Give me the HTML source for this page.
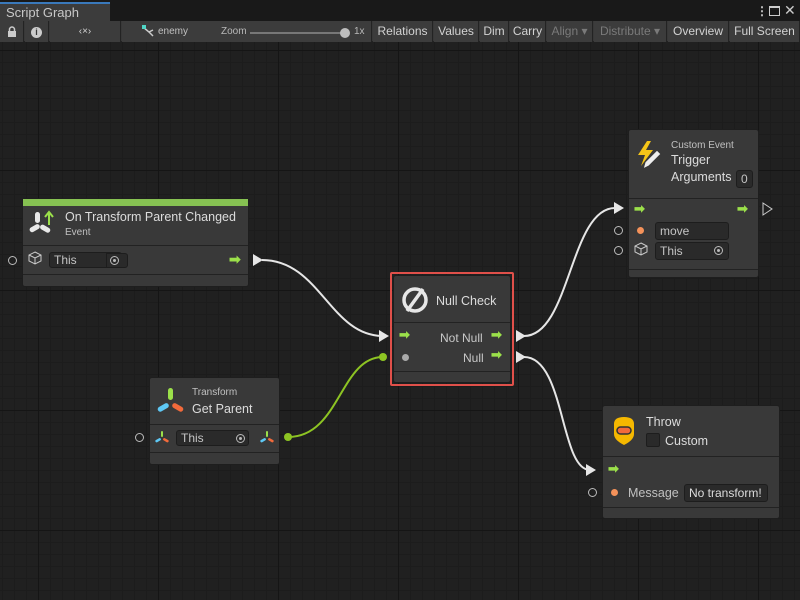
<!DOCTYPE html>
<html><head><meta charset="utf-8"><style>
*{margin:0;padding:0;box-sizing:border-box}
body{width:800px;height:600px;overflow:hidden;background:#202020;font-family:"Liberation Sans",sans-serif;color:#d2d2d2;position:relative}
.grid{position:absolute;left:0;top:42px;width:800px;height:558px;
background-image:
linear-gradient(#151515 1px,transparent 1px),
linear-gradient(90deg,#151515 1px,transparent 1px),
linear-gradient(#1c1c1c 1px,transparent 1px),
linear-gradient(90deg,#1c1c1c 1px,transparent 1px);
background-size:120px 120px,120px 120px,12px 12px,12px 12px;
background-position:0 8px,38px 0,0 8px,38px 0}
.abs{position:absolute}
.top{left:0;top:0;width:800px;height:21px;background:#191919}
.tab{left:0;top:2px;width:110px;height:19px;background:#3c3c3c;border-top:2px solid #3a79bb;font-size:13px;padding:1px 0 0 6px;color:#c8c8c8}
.tb{left:0;top:21px;width:800px;height:21px;background:#383838;border-bottom:1px solid #232323}
.btn{position:absolute;top:21px;height:21px;background:#3c3c3c;border-right:1px solid #232323;font-size:12px;color:#d2d2d2;line-height:21px;text-align:center}
.dis{color:#7a7a7a}
.node{position:absolute;background:#393939;border:1px solid #1e1e1e;border-radius:3px}
.sep{position:absolute;left:0;right:0;height:1px;background:#222}
.t{position:absolute;white-space:nowrap}
.fld{position:absolute;background:#2a2a2a;border:1px solid #1d1d1d;border-radius:3px;font-size:12px;color:#c4c4c4;padding-left:4px;line-height:15px}
.port{position:absolute;width:9px;height:9px;border:1px solid #bbb;border-radius:50%}
.dot{position:absolute;width:7px;height:7px;border-radius:50%;background:#f4925a}
</style></head><body>
<div class="grid"></div>
<div class="abs top"></div>
<div class="abs tab">Script Graph</div>
<div class="abs" style="left:756px;top:4px;color:#ccc;font-size:12px;font-weight:bold">⋮</div>
<div class="abs" style="left:769px;top:6px;width:11px;height:10px;border:1px solid #ccc;border-top-width:2px"></div>
<div class="abs" style="left:784px;top:2px;color:#ccc;font-size:14px">✕</div>
<div class="abs tb"></div>
<div class="btn" style="left:0;width:24px"></div>
<svg class="abs" style="left:7px;top:26px" width="10" height="11"><path d="M2.5 5 V3.5 a2.5 2.5 0 0 1 5 0 V5" stroke="#ccc" stroke-width="1.5" fill="none"/><rect x="1" y="5" width="8" height="6" fill="#ccc"/></svg>
<div class="btn" style="left:25px;width:24px"><span style="display:inline-block;width:11px;height:11px;border-radius:50%;background:#ccc;color:#383838;font-size:9px;line-height:11px;font-weight:bold">i</span></div>
<div class="btn" style="left:50px;width:71px;font-size:10px">‹×›</div>
<div class="btn" style="left:122px;width:250px;text-align:left"></div>
<svg class="abs" style="left:141px;top:24px" width="14" height="14"><path d="M2 3 L8 8 L12 12 M8 8 L12 6" stroke="#ccc" stroke-width="1.5" fill="none"/><rect x="1" y="1" width="4" height="4" fill="#4fd6c6"/></svg>
<div class="t" style="left:158px;top:26px;font-size:10px;color:#c0c0c0">enemy</div>
<div class="t" style="left:221px;top:26px;font-size:10px;color:#b8b8b8">Zoom</div>
<div class="abs" style="left:250px;top:32px;width:95px;height:2px;background:#777"></div>
<div class="abs" style="left:340px;top:28px;width:10px;height:10px;border-radius:50%;background:#bdbdbd"></div>
<div class="t" style="left:354px;top:26px;font-size:10px;color:#b8b8b8">1x</div>
<div class="btn" style="left:373px;width:60px">Relations</div>
<div class="btn" style="left:434px;width:45px">Values</div>
<div class="btn" style="left:480px;width:29px">Dim</div>
<div class="btn" style="left:510px;width:36px">Carry</div>
<div class="btn dis" style="left:547px;width:46px">Align ▾</div>
<div class="btn dis" style="left:594px;width:73px">Distribute ▾</div>
<div class="btn" style="left:668px;width:61px">Overview</div>
<div class="btn" style="left:730px;width:70px">Full Screen</div>

<svg class="abs" style="left:0;top:0" width="800" height="600">
<path d="M262 260 C320 260 330 336 383 336" stroke="#e6e6e6" stroke-width="2" fill="none"/>
<path d="M288 437 C340 437 340 357 383 357" stroke="#8dc423" stroke-width="2" fill="none"/>
<path d="M524 336 C570 336 570 208 615 208" stroke="#e6e6e6" stroke-width="2" fill="none"/>
<path d="M524 357 C565 357 560 470 590 470" stroke="#e6e6e6" stroke-width="2" fill="none"/>
<polygon points="253,254 263,260 253,266" fill="#e6e6e6"/>
<polygon points="379,330 389,336 379,342" fill="#e6e6e6"/>
<polygon points="516,330 526,336 516,342" fill="#e6e6e6"/>
<polygon points="516,351 526,357 516,363" fill="#e6e6e6"/>
<polygon points="614,202 624,208 614,214" fill="#e6e6e6"/>
<polygon points="586,464 596,470 586,476" fill="#e6e6e6"/>
<polygon points="763,203 772,209 763,215" fill="none" stroke="#ccc" stroke-width="1"/>
<circle cx="288" cy="437" r="4" fill="#8dc423"/>
<circle cx="383" cy="357" r="4" fill="#8dc423"/>
</svg>

<!-- Node 1 -->
<div class="port" style="left:8px;top:256px"></div>
<div class="node" style="left:22px;top:198px;width:227px;height:89px">
 <div class="abs" style="left:0;top:0;width:225px;height:7px;background:#86c152"></div>
 <svg class="abs" style="left:5px;top:11px" width="30" height="28"><g fill="#e8e8e8"><rect x="7" y="2" width="5" height="11" rx="2.5"/><rect x="1" y="16" width="11" height="5" rx="2.5" transform="rotate(-30 6 18)"/><rect x="12" y="16" width="11" height="5" rx="2.5" transform="rotate(30 17 18)"/></g><path d="M21 15 V3 M17 7 L21 2 L25 7" stroke="#9be04a" stroke-width="2" fill="none"/></svg>
 <div class="t" style="left:42px;top:11px;font-size:12.5px;color:#dcdcdc">On Transform Parent Changed</div>
 <div class="t" style="left:42px;top:28px;font-size:10px;color:#c0c0c0">Event</div>
 <div class="sep" style="top:46px"></div>
 <svg class="abs" style="left:5px;top:52px" width="14" height="14"><path d="M7 1 L13 4 L13 10 L7 13 L1 10 L1 4 Z M1 4 L7 7 L13 4 M7 7 V13" stroke="#ccc" stroke-width="1" fill="none"/></svg>
 <div class="fld" style="left:26px;top:53px;width:73px;height:16px;font-size:12px">This</div>
 <div class="abs" style="left:83px;top:54px;width:22px;height:15px;background:#2a2a2a;border-radius:0 3px 3px 0;border:1px solid #1d1d1d"></div>
 <div class="port" style="left:87px;top:57px;border-color:#bbb"><div style="width:3px;height:3px;margin:2px;background:#bbb;border-radius:50%"></div></div>
 <div class="t" style="left:206px;top:52px;color:#9be04a;font-size:14px;font-weight:bold">➡</div>
 <div class="sep" style="top:75px"></div>
</div>

<!-- Get Parent -->
<div class="port" style="left:135px;top:433px"></div>
<div class="node" style="left:149px;top:377px;width:131px;height:88px">
 <svg class="abs" style="left:7px;top:9px" width="28" height="30"><rect x="11" y="1" width="5" height="12" rx="2.5" fill="#9be04a"/><rect x="0" y="18" width="12" height="5" rx="2.5" fill="#5ec8f5" transform="rotate(-30 6 20)"/><rect x="15" y="18" width="12" height="5" rx="2.5" fill="#f26a3b" transform="rotate(30 21 20)"/></svg>
 <div class="t" style="left:42px;top:9px;font-size:10px;color:#c0c0c0">Transform</div>
 <div class="t" style="left:42px;top:24px;font-size:12.5px;color:#dcdcdc">Get Parent</div>
 <div class="sep" style="top:46px"></div>
 <svg class="abs" style="left:5px;top:53px" width="14" height="13"><rect x="6" y="0" width="2" height="6" rx="1" fill="#9be04a"/><rect x="0" y="8" width="6" height="2.5" rx="1.2" fill="#5ec8f5" transform="rotate(-30 3 9)"/><rect x="8" y="8" width="6" height="2.5" rx="1.2" fill="#f26a3b" transform="rotate(30 11 9)"/></svg>
 <div class="fld" style="left:26px;top:52px;width:73px;height:16px">This</div>
 <div class="port" style="left:86px;top:56px"><div style="width:3px;height:3px;margin:2px;background:#bbb;border-radius:50%"></div></div>
 <svg class="abs" style="left:110px;top:53px" width="14" height="13"><rect x="6" y="0" width="2" height="6" rx="1" fill="#9be04a"/><rect x="0" y="8" width="6" height="2.5" rx="1.2" fill="#5ec8f5" transform="rotate(-30 3 9)"/><rect x="8" y="8" width="6" height="2.5" rx="1.2" fill="#f26a3b" transform="rotate(30 11 9)"/></svg>
 <div class="sep" style="top:74px"></div>
</div>

<!-- Null Check -->
<div class="abs" style="left:390px;top:272px;width:124px;height:114px;border:2px solid #e0504a;border-radius:2px"></div>
<div class="node" style="left:393px;top:275px;width:118px;height:108px">
 <svg class="abs" style="left:6px;top:9px" width="30" height="30"><circle cx="15" cy="15" r="11" stroke="#e6e6e6" stroke-width="3.5" fill="none"/><path d="M7 26 L23 4" stroke="#e6e6e6" stroke-width="3.5"/></svg>
 <div class="t" style="left:42px;top:18px;font-size:12.5px;color:#dcdcdc">Null Check</div>
 <div class="sep" style="top:46px"></div>
 <div class="t" style="left:5px;top:51px;color:#9be04a;font-size:13px;font-weight:bold">➡</div>
 <div class="t" style="left:46px;top:55px;font-size:12px;color:#c8c8c8">Not Null</div>
 <div class="t" style="left:97px;top:51px;color:#9be04a;font-size:13px;font-weight:bold">➡</div>
 <div class="abs" style="left:8px;top:78px;width:7px;height:7px;border-radius:50%;background:#aaa"></div>
 <div class="t" style="left:69px;top:75px;font-size:12px;color:#c8c8c8">Null</div>
 <div class="t" style="left:97px;top:71px;color:#9be04a;font-size:13px;font-weight:bold">➡</div>
 <div class="sep" style="top:95px"></div>
</div>

<!-- Custom Event -->
<div class="port" style="left:614px;top:226px"></div>
<div class="port" style="left:614px;top:246px"></div>
<div class="node" style="left:628px;top:129px;width:131px;height:149px">
 <svg class="abs" style="left:6px;top:10px" width="30" height="32"><path d="M12 1 L3 15 L10 15 L6 26 L18 10 L11 10 L16 1 Z" fill="#f5c518"/><path d="M8 29 L10 22 L22 10 L26 14 L14 26 Z" fill="#eee" stroke="#393939" stroke-width="1.2"/></svg>
 <div class="t" style="left:42px;top:10px;font-size:10px;color:#c0c0c0">Custom Event</div>
 <div class="t" style="left:42px;top:23px;font-size:12.5px;color:#dcdcdc">Trigger</div>
 <div class="t" style="left:42px;top:40px;font-size:12.5px;color:#dcdcdc">Arguments</div>
 <div class="fld" style="left:107px;top:40px;width:17px;height:18px;padding-left:4px;line-height:17px">0</div>
 <div class="sep" style="top:68px"></div>
 <div class="t" style="left:5px;top:71px;color:#9be04a;font-size:13px;font-weight:bold">➡</div>
 <div class="t" style="left:108px;top:71px;color:#9be04a;font-size:13px;font-weight:bold">➡</div>
 <div class="dot" style="left:8px;top:97px"></div>
 <div class="fld" style="left:26px;top:92px;width:74px;height:18px;line-height:16px">move</div>
 <svg class="abs" style="left:5px;top:112px" width="14" height="14"><path d="M7 1 L13 4 L13 10 L7 13 L1 10 L1 4 Z M1 4 L7 7 L13 4 M7 7 V13" stroke="#ccc" stroke-width="1" fill="none"/></svg>
 <div class="fld" style="left:26px;top:112px;width:74px;height:18px;line-height:16px">This</div>
 <div class="port" style="left:85px;top:116px"><div style="width:3px;height:3px;margin:2px;background:#bbb;border-radius:50%"></div></div>
 <div class="sep" style="top:139px"></div>
</div>

<!-- Throw -->
<div class="port" style="left:588px;top:488px"></div>
<div class="node" style="left:602px;top:405px;width:178px;height:114px">
 <svg class="abs" style="left:8px;top:10px" width="26" height="30"><path d="M3 8 Q3 1 13 1 Q23 1 23 8 L23 18 Q23 24 13 29 Q3 24 3 18 Z" fill="#f5b800"/><rect x="6" y="11" width="14" height="7" rx="3.5" fill="#f26a3b" stroke="#333" stroke-width="1.5"/></svg>
 <div class="t" style="left:43px;top:9px;font-size:12.5px;color:#dcdcdc">Throw</div>
 <div class="abs" style="left:43px;top:27px;width:14px;height:14px;background:#2a2a2a;border:1px solid #1d1d1d;border-radius:2px"></div>
 <div class="t" style="left:62px;top:28px;font-size:12.5px;color:#dcdcdc">Custom</div>
 <div class="sep" style="top:50px"></div>
 <div class="t" style="left:5px;top:55px;color:#9be04a;font-size:13px;font-weight:bold">➡</div>
 <div class="dot" style="left:8px;top:83px"></div>
 <div class="t" style="left:25px;top:80px;font-size:12.5px;color:#c0c0c0">Message</div>
 <div class="fld" style="left:81px;top:78px;width:84px;height:18px;line-height:16px;color:#dcdcdc">No transform!</div>
 <div class="sep" style="top:101px"></div>
</div>
</body></html>
